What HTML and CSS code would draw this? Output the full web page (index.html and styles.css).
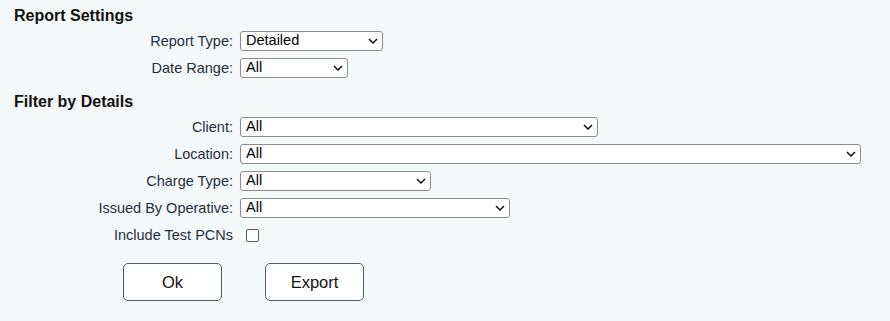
FILE: index.html
```html
<!DOCTYPE html>
<html lang="en">
<head>
    <meta charset="UTF-8">
    <title>Report Settings</title>
    <link rel="stylesheet" href="styles.css">
</head>
<body>
    <div class="report-panel">
        <h3 class="section-title">Report Settings</h3>
        <div class="form-grid">
            <label class="field-label">Report Type:</label>
            <div class="select-wrap w-report">
                <select><option>Detailed</option></select>
                <svg class="chevron" viewBox="0 0 10 6"><path d="M1 1 L5 5 L9 1" /></svg>
            </div>

            <label class="field-label">Date Range:</label>
            <div class="select-wrap w-date">
                <select><option>All</option></select>
                <svg class="chevron" viewBox="0 0 10 6"><path d="M1 1 L5 5 L9 1" /></svg>
            </div>
        </div>

        <h3 class="section-title second">Filter by Details</h3>
        <div class="form-grid">
            <label class="field-label">Client:</label>
            <div class="select-wrap w-client">
                <select><option>All</option></select>
                <svg class="chevron" viewBox="0 0 10 6"><path d="M1 1 L5 5 L9 1" /></svg>
            </div>

            <label class="field-label">Location:</label>
            <div class="select-wrap w-location">
                <select><option>All</option></select>
                <svg class="chevron" viewBox="0 0 10 6"><path d="M1 1 L5 5 L9 1" /></svg>
            </div>

            <label class="field-label">Charge Type:</label>
            <div class="select-wrap w-charge">
                <select><option>All</option></select>
                <svg class="chevron" viewBox="0 0 10 6"><path d="M1 1 L5 5 L9 1" /></svg>
            </div>

            <label class="field-label">Issued By Operative:</label>
            <div class="select-wrap w-issued">
                <select><option>All</option></select>
                <svg class="chevron" viewBox="0 0 10 6"><path d="M1 1 L5 5 L9 1" /></svg>
            </div>

            <label class="field-label">Include Test PCNs</label>
            <div class="check-cell">
                <input type="checkbox" class="test-check">
            </div>
        </div>

        <div class="actions">
            <button class="action-btn">Ok</button>
            <button class="action-btn">Export</button>
        </div>
    </div>
</body>
</html>
```

FILE: styles.css
```css
body {
    margin: 0;
    background: #f5f8f9;
    font-family: 'Liberation Sans', Arial, sans-serif;
    color: #1e3044;
}
.report-panel {
    padding: 7px 14px 20px;
}
.section-title {
    margin: 0;
    font-size: 16px;
    font-weight: bold;
    line-height: 18px;
    color: #111;
}
.section-title.second {
    margin-top: 15px;
}
.form-grid {
    display: grid;
    grid-template-columns: 219px auto;
    column-gap: 7px;
    row-gap: 7px;
    margin-top: 6px;
    justify-items: start;
    align-items: center;
}
.field-label {
    justify-self: end;
    font-size: 14.5px;
    line-height: 20px;
    color: #1e3044;
}
.select-wrap {
    position: relative;
    height: 20px;
}
.select-wrap select {
    appearance: none;
    -webkit-appearance: none;
    width: 100%;
    height: 20px;
    margin: 0;
    padding: 0 20px 1px 5px;
    border: 1px solid #8c8c8c;
    border-radius: 3px;
    background: #fff;
    font-family: 'Liberation Sans', Arial, sans-serif;
    font-size: 14.5px;
    line-height: 17px;
    color: #000;
}
.select-wrap .chevron {
    position: absolute;
    right: 5px;
    top: 7px;
    width: 10px;
    height: 6px;
    fill: none;
    stroke: #111;
    stroke-width: 1.5;
    pointer-events: none;
}
.w-report { width: 143px; }
.w-date { width: 108px; }
.w-client { width: 358px; }
.w-location { width: 621px; }
.w-charge { width: 191px; }
.w-issued { width: 270px; }
.check-cell {
    height: 20px;
    display: flex;
    align-items: center;
}
.test-check {
    appearance: none;
    -webkit-appearance: none;
    width: 13px;
    height: 13px;
    margin: 0 0 0 6px;
    border: 1px solid #5c5c5c;
    border-radius: 2px;
    background: #fff;
}
.actions {
    display: flex;
    gap: 43px;
    margin: 18px 0 0 109px;
}
.action-btn {
    width: 99px;
    height: 38px;
    border: 1px solid #4d5e6c;
    border-radius: 5px;
    background: #fff;
    font-family: 'Liberation Sans', Arial, sans-serif;
    font-size: 16.5px;
    color: #111;
    cursor: pointer;
}
```
